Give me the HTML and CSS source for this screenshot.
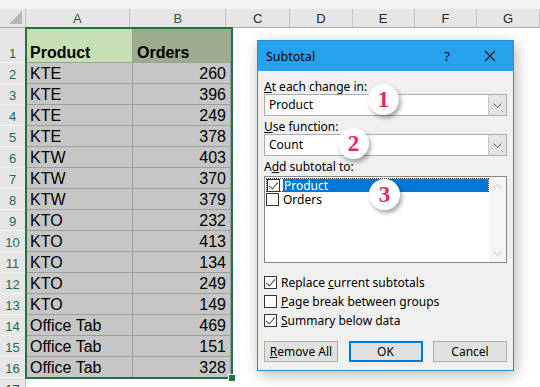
FILE: index.html
```html
<!DOCTYPE html>
<html lang="en">
<head>
    <meta charset="UTF-8">
    <title>Subtotal</title>
    <link rel="stylesheet" href="styles.css">
</head>
<body>
    <div class="sheet">
        <div class="topband"></div>
        <div class="colheads">
            <div class="corner"><span class="tri"></span></div>
            <div class="ch col-a sel">A</div>
            <div class="ch col-b sel">B</div>
            <div class="ch col-c">C</div>
            <div class="ch col-d">D</div>
            <div class="ch col-e">E</div>
            <div class="ch col-f">F</div>
            <div class="ch col-g">G</div>
        </div>

        <div class="row row-first">
            <div class="rh">1</div>
            <div class="cell col-a head-a">Product</div>
            <div class="cell col-b head-b">Orders</div>
        </div>
        <div class="row"><div class="rh">2</div><div class="cell col-a">KTE</div><div class="cell col-b num">260</div></div>
        <div class="row"><div class="rh">3</div><div class="cell col-a">KTE</div><div class="cell col-b num">396</div></div>
        <div class="row"><div class="rh">4</div><div class="cell col-a">KTE</div><div class="cell col-b num">249</div></div>
        <div class="row"><div class="rh">5</div><div class="cell col-a">KTE</div><div class="cell col-b num">378</div></div>
        <div class="row"><div class="rh">6</div><div class="cell col-a">KTW</div><div class="cell col-b num">403</div></div>
        <div class="row"><div class="rh">7</div><div class="cell col-a">KTW</div><div class="cell col-b num">370</div></div>
        <div class="row"><div class="rh">8</div><div class="cell col-a">KTW</div><div class="cell col-b num">379</div></div>
        <div class="row"><div class="rh">9</div><div class="cell col-a">KTO</div><div class="cell col-b num">232</div></div>
        <div class="row"><div class="rh">10</div><div class="cell col-a">KTO</div><div class="cell col-b num">413</div></div>
        <div class="row"><div class="rh">11</div><div class="cell col-a">KTO</div><div class="cell col-b num">134</div></div>
        <div class="row"><div class="rh">12</div><div class="cell col-a">KTO</div><div class="cell col-b num">249</div></div>
        <div class="row"><div class="rh">13</div><div class="cell col-a">KTO</div><div class="cell col-b num">149</div></div>
        <div class="row"><div class="rh">14</div><div class="cell col-a">Office Tab</div><div class="cell col-b num">469</div></div>
        <div class="row"><div class="rh">15</div><div class="cell col-a">Office Tab</div><div class="cell col-b num">151</div></div>
        <div class="row"><div class="rh">16</div><div class="cell col-a">Office Tab</div><div class="cell col-b num">328</div></div>
        <div class="row row-plain"><div class="rh plain">17</div></div>

        <!-- selected range A1:B16 -->
        <div class="selection"><span class="handle"></span></div>
    </div>

    <!-- Subtotal dialog -->
    <div class="dialog">
        <div class="titlebar">
            <span class="title">Subtotal</span>
            <span class="help">?</span>
            <svg class="close" width="12" height="12" viewBox="0 0 12 12">
                <path d="M1 1 L11 11 M11 1 L1 11" stroke="#1a1a1a" stroke-width="1.1" fill="none"/>
            </svg>
        </div>
        <div class="dlg-body">
            <div class="label"><u>A</u>t each change in:</div>
            <div class="combo">
                <span class="combo-text">Product</span>
                <span class="combo-arrow"><svg width="9" height="5" viewBox="0 0 9 5"><path d="M0.5 0.5 L4.5 4.5 L8.5 0.5" stroke="#555" fill="none"/></svg></span>
            </div>

            <div class="label"><u>U</u>se function:</div>
            <div class="combo">
                <span class="combo-text">Count</span>
                <span class="combo-arrow"><svg width="9" height="5" viewBox="0 0 9 5"><path d="M0.5 0.5 L4.5 4.5 L8.5 0.5" stroke="#555" fill="none"/></svg></span>
            </div>

            <div class="label">A<u>d</u>d subtotal to:</div>
            <div class="listbox">
                <div class="list-items">
                    <div class="item focused">
                        <span class="box checked"></span>
                        <span class="item-text active">Product</span>
                    </div>
                    <div class="item">
                        <span class="box"></span>
                        <span class="item-text">Orders</span>
                    </div>
                </div>
                <div class="scrollbar">
                    <svg width="9" height="5" viewBox="0 0 9 5"><path d="M0.5 4.5 L4.5 0.5 L8.5 4.5" stroke="#c4c4c4" fill="none"/></svg>
                    <svg width="9" height="5" viewBox="0 0 9 5"><path d="M0.5 0.5 L4.5 4.5 L8.5 0.5" stroke="#c4c4c4" fill="none"/></svg>
                </div>
            </div>

            <div class="checks">
                <div class="check"><span class="box checked"></span><span>Replace <u>c</u>urrent subtotals</span></div>
                <div class="check"><span class="box"></span><span><u>P</u>age break between groups</span></div>
                <div class="check"><span class="box checked"></span><span><u>S</u>ummary below data</span></div>
            </div>

            <div class="buttons">
                <div class="btn"><u>R</u>emove All</div>
                <div class="btn default">OK</div>
                <div class="btn">Cancel</div>
            </div>
        </div>
    </div>

    <!-- numbered callouts -->
    <div class="badge badge-1">1</div>
    <div class="badge badge-2">2</div>
    <div class="badge badge-3">3</div>
</body>
</html>
```

FILE: styles.css
```css
body {
    margin: 0;
    width: 540px;
    height: 387px;
    overflow: hidden;
    background: #ffffff;
    font-family: "Liberation Sans", Arial, sans-serif;
    position: relative;
}

/* ---------- sheet ---------- */
.sheet {
    position: relative;
}
.topband {
    height: 9px;
    background: #f3f3f3;
}
.colheads {
    display: flex;
    height: 18px;
    background: #e6e6e6;
    border-bottom: 1px solid #ababab;
}
.corner {
    width: 25px;
    border-right: 1px solid #c6c6c6;
    position: relative;
}
.tri {
    position: absolute;
    right: 3px;
    bottom: 3px;
    width: 0;
    height: 0;
    border-left: 13px solid transparent;
    border-bottom: 13px solid #b7b7b7;
}
.ch {
    box-sizing: border-box;
    text-align: center;
    font-size: 13px;
    line-height: 19px;
    color: #262626;
    border-right: 1px solid #c6c6c6;
}
.ch.sel {
    color: #1e5c40;
}
.col-a { width: 107px; }
.col-b { width: 98px; }
.col-c { width: 65px; }
.col-d { width: 64px; }
.col-e { width: 63px; }
.col-f { width: 64px; }
.col-g { width: 64px; }

.row {
    display: flex;
    height: 21px;
}
.row-first {
    height: 35px;
}
.rh {
    box-sizing: border-box;
    width: 26px;
    background: #e6e6e6;
    border-bottom: 1px solid #f4f4f4;
    border-right: 1px solid #c6c6c6;
    color: #1e6b4a;
    font-size: 13px;
    text-align: center;
    display: flex;
    align-items: flex-end;
    justify-content: center;
    padding-bottom: 1px;
}
.rh.plain {
    color: #444;
}
.cell {
    box-sizing: border-box;
    background: #c6c6c6;
    border-right: 1px solid #9e9e9e;
    border-bottom: 1px solid #9e9e9e;
    font-size: 16px;
    color: #000;
    display: flex;
    align-items: flex-end;
    padding: 0 4px 0 4px;
    line-height: 19px;
    white-space: nowrap;
}
.cell.num {
    justify-content: flex-end;
}
.head-a {
    background: #c6e0b4;
    font-weight: bold;
    line-height: 19px;
}
.head-b {
    background: #9cad8d;
    font-weight: bold;
    line-height: 19px;
}

.selection {
    position: absolute;
    left: 25px;
    top: 27px;
    width: 204px;
    height: 348px;
    border: 2px solid #217346;
}
.handle {
    position: absolute;
    right: -5px;
    bottom: -5px;
    width: 6px;
    height: 6px;
    background: #217346;
    border: 1px solid #fff;
}

/* ---------- dialog ---------- */
.dialog {
    position: absolute;
    left: 257px;
    top: 40px;
    width: 255px;
    height: 329px;
    background: #f0f0f0;
    border: 1px solid #1c8fe0;
    box-shadow: 2px 4px 14px rgba(0, 0, 0, 0.28);
    font-family: "Noto Sans", "Open Sans", sans-serif;
    font-size: 12px;
    color: #000;
}
.titlebar {
    height: 30px;
    background: #29a2ec;
    display: flex;
    align-items: center;
    padding: 0 0 0 8px;
}
.title {
    flex: 1;
    font-size: 12.5px;
    color: #000;
}
.help {
    font-size: 13px;
    margin-right: 34px;
}
.close {
    margin-right: 17px;
}
.dlg-body {
    padding: 8px 6px 0 6px;
}
.label {
    height: 15px;
    line-height: 15px;
}
.combo {
    box-sizing: border-box;
    height: 22px;
    background: #fff;
    border: 1px solid #acacac;
    display: flex;
    margin-bottom: 3px;
}
.combo-text {
    flex: 1;
    line-height: 20px;
    padding-left: 4px;
}
.combo-arrow {
    box-sizing: border-box;
    width: 18px;
    background: #e5e5e5;
    border-left: 1px solid #c8c8c8;
    display: flex;
    align-items: center;
    justify-content: center;
}
.listbox {
    box-sizing: border-box;
    height: 87px;
    margin-top: 2px;
    background: #fff;
    border: 1px solid #828790;
    display: flex;
}
.list-items {
    flex: 1;
    padding-top: 1px;
    padding-left: 1px;
}
.item {
    display: flex;
    align-items: center;
    height: 14px;
    box-sizing: border-box;
}
.item.focused {
    border: 1px dotted #333;
}
.item .box {
    margin-right: 3px;
}
.item-text {
    flex: 1;
    line-height: 13px;
    padding-left: 1px;
}
.item-text.active {
    background: #0078d7;
    color: #fff;
}
.scrollbar {
    width: 17px;
    background: #f5f5f5;
    display: flex;
    flex-direction: column;
    justify-content: space-between;
    align-items: center;
    padding: 7px 0 6px;
}
.box {
    box-sizing: border-box;
    display: inline-block;
    width: 13px;
    height: 13px;
    border: 1px solid #333;
    background: #fff;
    position: relative;
    flex: none;
}
.box.checked::after {
    content: "";
    position: absolute;
    left: 3px;
    top: 0px;
    width: 4px;
    height: 8px;
    border-right: 1.5px solid #444;
    border-bottom: 1.5px solid #444;
    transform: rotate(40deg);
}
.checks {
    margin-top: 10px;
}
.check {
    display: flex;
    align-items: center;
    height: 19px;
    gap: 4px;
}
.buttons {
    display: flex;
    justify-content: space-between;
    margin-top: 11px;
}
.btn {
    box-sizing: border-box;
    width: 74px;
    height: 21px;
    background: #e1e1e1;
    border: 1px solid #adadad;
    text-align: center;
    line-height: 19px;
}
.btn.default {
    border: 2px solid #0078d7;
    line-height: 17px;
}

/* ---------- callouts ---------- */
.badge {
    position: absolute;
    width: 31px;
    height: 31px;
    border-radius: 50%;
    background: #fff;
    box-shadow: 2px 3px 4px rgba(0, 0, 0, 0.35);
    font-family: "Liberation Serif", "Times New Roman", serif;
    font-weight: bold;
    font-size: 23px;
    line-height: 31px;
    text-align: center;
    color: #e3285a;
}
.badge-1 {
    left: 368px;
    top: 84px;
}
.badge-2 {
    left: 338px;
    top: 128px;
}
.badge-3 {
    left: 369px;
    top: 179px;
}
```
